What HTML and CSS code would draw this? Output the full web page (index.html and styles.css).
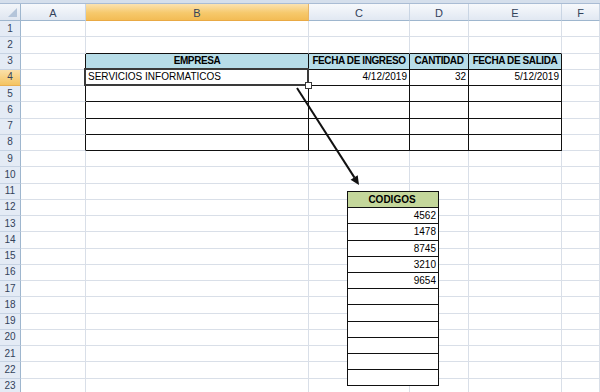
FILE: index.html
```html
<!DOCTYPE html>
<html lang="es">
<head>
  <meta charset="UTF-8">
  <title>Hoja1</title>
  <link rel="stylesheet" href="styles.css">
</head>
<body>
  <div class="workbook">
    <div class="topbar"></div>
    <div class="sheet" id="sheet"></div>

    <svg class="arrow" width="600" height="392" viewBox="0 0 600 392">
      <line x1="297" y1="88" x2="354.5" y2="177.6" stroke="#111" stroke-width="2"/>
      <polygon points="359,185 350.6,179.8 357.7,175.2" fill="#111"/>
    </svg>

    <div class="codigos">
      <div class="crow head">CODIGOS</div>
      <div class="crow">4562</div>
      <div class="crow">1478</div>
      <div class="crow">8745</div>
      <div class="crow">3210</div>
      <div class="crow">9654</div>
      <div class="crow"></div>
      <div class="crow"></div>
      <div class="crow"></div>
      <div class="crow"></div>
      <div class="crow"></div>
      <div class="crow"></div>
    </div>
  </div>

  <script>
    const sheet = document.getElementById('sheet');
    const cols = ['A', 'B', 'C', 'D', 'E', 'F'];
    const data = {
      B3: 'EMPRESA', C3: 'FECHA DE INGRESO', D3: 'CANTIDAD', E3: 'FECHA DE SALIDA',
      B4: 'SERVICIOS INFORMATICOS', C4: '4/12/2019', D4: '32', E4: '5/12/2019'
    };

    function addCell(cls, text) {
      const div = document.createElement('div');
      div.className = cls;
      if (text !== undefined) div.textContent = text;
      sheet.appendChild(div);
    }

    addCell('corner');
    cols.forEach(c => addCell('colhead' + (c === 'B' ? ' sel' : ''), c));

    for (let r = 1; r <= 23; r++) {
      addCell('rowhead' + (r === 4 ? ' sel' : ''), r);
      cols.forEach((c, i) => {
        const classes = ['cell'];
        const inTable = i >= 1 && i <= 4 && r >= 3 && r <= 8;
        if (inTable) classes.push('box');
        if (i === 0 && r >= 3 && r <= 8) classes.push('edge-r');
        if (i >= 1 && i <= 4 && r === 2) classes.push('edge-b');
        if (inTable && r === 3) classes.push('th');
        if (r === 4 && i >= 2 && i <= 4) classes.push('num');
        if (c + r === 'B4') classes.push('active');
        addCell(classes.join(' '), data[c + r]);
      });
    }
  </script>
</body>
</html>
```

FILE: styles.css
```css
* {
  margin: 0;
  padding: 0;
  box-sizing: border-box;
}

body {
  font-family: 'Liberation Sans', Arial, sans-serif;
  font-size: 10px;
  line-height: 12px;
  color: #000;
  background-color: #fff;
}

.workbook {
  position: relative;
  width: 600px;
  height: 392px;
  overflow: hidden;
}

.topbar {
  height: 4px;
  background-color: #d5dfec;
  border-bottom: 1px solid #a9bcd4;
}

.sheet {
  display: grid;
  grid-template-columns: 21px 65px 223px 101px 59px 93px 1fr;
  grid-template-rows: 17px repeat(23, 16.25px);
}

.corner,
.colhead,
.rowhead,
.cell {
  display: flex;
  align-items: center;
  white-space: nowrap;
}

.corner {
  position: relative;
  background: linear-gradient(#f3f6fa, #dfe6f0);
  border-right: 1px solid #9eb6ce;
  border-bottom: 1px solid #9eb6ce;
}

.corner::after {
  content: "";
  position: absolute;
  right: 3px;
  bottom: 3px;
  border-left: 9px solid transparent;
  border-bottom: 9px solid #b4c5da;
}

.colhead {
  justify-content: center;
  background: linear-gradient(#f7f9fc, #e1e8f2);
  border-right: 1px solid #c9d5e4;
  border-bottom: 1px solid #9eb6ce;
  color: #33425a;
  font-size: 11px;
  padding-top: 1px;
}

.colhead.sel {
  background: linear-gradient(#fbe2b0, #f6c96c 55%, #f3bc55);
  border-right-color: #e7b566;
  border-bottom-color: #e9a944;
}

.rowhead {
  justify-content: center;
  background-color: #e4ebf5;
  border-right: 1px solid #9eb6ce;
  border-bottom: 1px solid #c7d3e3;
  color: #33425a;
}

.rowhead.sel {
  background: linear-gradient(#fbe0a9, #f4c462);
  border-bottom-color: #e9b052;
}

.cell {
  padding: 0 2px;
  border-right: 1px solid #d9dfe8;
  border-bottom: 1px solid #d9dfe8;
}

.cell.box {
  border-right-color: #111;
  border-bottom-color: #111;
}

.cell.edge-r {
  border-right-color: #111;
}

.cell.edge-b {
  border-bottom-color: #111;
}

.cell.th {
  justify-content: center;
  background-color: #b7dde8;
  font-weight: bold;
  letter-spacing: -0.4px;
}

.cell.num {
  justify-content: flex-end;
}

.cell.active {
  position: relative;
}

.cell.active::after {
  content: "";
  position: absolute;
  left: -2px;
  top: -2px;
  right: -1px;
  bottom: -1px;
  border: 2px solid #3a3a3a;
}

.cell.active::before {
  content: "";
  position: absolute;
  right: -4px;
  bottom: -4px;
  width: 5px;
  height: 5px;
  background-color: #fff;
  border: 1px solid #3a3a3a;
  z-index: 1;
}

.arrow {
  position: absolute;
  left: 0;
  top: 0;
  pointer-events: none;
}

.codigos {
  position: absolute;
  left: 347px;
  top: 191px;
  width: 92px;
  background-color: #fff;
  border-left: 1px solid #111;
  border-top: 1px solid #111;
}

.crow {
  height: 16.2px;
  line-height: 15px;
  padding-right: 2px;
  text-align: right;
  border-right: 1px solid #111;
  border-bottom: 1px solid #111;
}

.crow.head {
  text-align: center;
  font-weight: bold;
  background-color: #c4d79b;
}
```
